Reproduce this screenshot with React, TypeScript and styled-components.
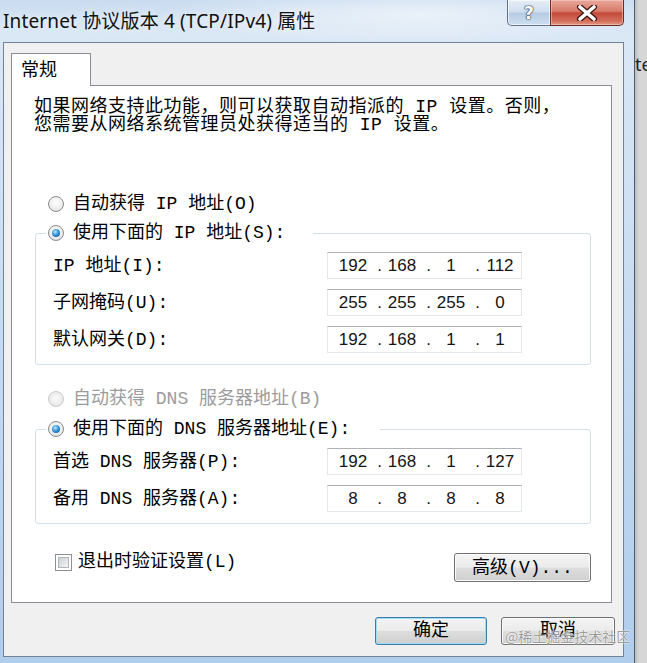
import React from 'react'
import styled, { createGlobalStyle } from 'styled-components'

const DIALOG_FONT = `"Liberation Mono", "Noto Sans CJK SC", monospace`
const TITLE_FONT = `"Noto Sans", "Noto Sans CJK SC", sans-serif`

interface IAddressRow {
  label: string;
  value: string;
}

const ipRows: IAddressRow[] = [
  { label: 'IP 地址(I):', value: '192.168.1.112' },
  { label: '子网掩码(U):', value: '255.255.255.0' },
  { label: '默认网关(D):', value: '192.168.1.1' },
]

const dnsRows: IAddressRow[] = [
  { label: '首选 DNS 服务器(P):', value: '192.168.1.127' },
  { label: '备用 DNS 服务器(A):', value: '8.8.8.8' },
]

const GlobalStyle = createGlobalStyle`
  html, body {
    margin: 0;
    padding: 0;
    background: #d4d4d4;
  }
`

const IpField: React.FC<{ value: string }> = ({ value }) => {
  const octets = value.split('.')
  return (
    <StyledIpBox>
      {octets.map((octet, i) => (
        <React.Fragment key={i}>
          {i > 0 && <StyledDot>.</StyledDot>}
          <StyledOctet>{octet}</StyledOctet>
        </React.Fragment>
      ))}
    </StyledIpBox>
  )
}

const AddressGroup: React.FC<{ legend: string; legendWidth: number; rows: IAddressRow[] }> = ({
  legend,
  legendWidth,
  rows,
}) => {
  return (
    <StyledFieldset>
      <StyledLegend $width={legendWidth}>
        <StyledOption>
          <StyledRadio $checked />
          <span>{legend}</span>
        </StyledOption>
      </StyledLegend>
      <StyledRows>
        {rows.map(row => (
          <StyledRow key={row.label}>
            <StyledRowLabel>{row.label}</StyledRowLabel>
            <IpField value={row.value} />
          </StyledRow>
        ))}
      </StyledRows>
    </StyledFieldset>
  )
}

const App: React.FC = () => {
  return (
    <StyledScreen>
      <GlobalStyle />
      <StyledWindow>
        <StyledTitleBar>
          <StyledTitle>Internet 协议版本 4 (TCP/IPv4) 属性</StyledTitle>
          <StyledCaptionButtons>
            <StyledHelpButton>?</StyledHelpButton>
            <StyledCloseButton>
              <svg width="22" height="16" viewBox="0 0 22 16">
                <path d="M4 2 L18 14 M18 2 L4 14" stroke="#3a1410" strokeWidth="6" strokeLinecap="round" />
                <path d="M4 2 L18 14 M18 2 L4 14" stroke="#ffffff" strokeWidth="3.6" strokeLinecap="round" />
              </svg>
            </StyledCloseButton>
          </StyledCaptionButtons>
        </StyledTitleBar>

        <StyledClient>
          <StyledTabStrip>
            <StyledTab>常规</StyledTab>
          </StyledTabStrip>
          <StyledPanel>
            <StyledDescription>
              <div>如果网络支持此功能，则可以获取自动指派的 IP 设置。否则，</div>
              <div>您需要从网络系统管理员处获得适当的 IP 设置。</div>
            </StyledDescription>

            <StyledOption $top={61}>
              <StyledRadio />
              <span>自动获得 IP 地址(O)</span>
            </StyledOption>
            <StyledGroupSlot $top={11}>
              <AddressGroup legend="使用下面的 IP 地址(S):" legendWidth={267} rows={ipRows} />
            </StyledGroupSlot>

            <StyledOption $top={25} $disabled>
              <StyledRadio $disabled />
              <span>自动获得 DNS 服务器地址(B)</span>
            </StyledOption>
            <StyledGroupSlot $top={12}>
              <AddressGroup legend="使用下面的 DNS 服务器地址(E):" legendWidth={334} rows={dnsRows} />
            </StyledGroupSlot>

            <StyledBottomRow>
              <StyledCheckOption>
                <StyledCheckBox />
                <span>退出时验证设置(L)</span>
              </StyledCheckOption>
              <StyledButton $width={137} $height={29}>高级(V)...</StyledButton>
            </StyledBottomRow>
          </StyledPanel>

          <StyledFooter>
            <StyledButton $width={112} $height={28} $focused>确定</StyledButton>
            <StyledButton $width={114} $height={28}>取消</StyledButton>
          </StyledFooter>
        </StyledClient>
      </StyledWindow>
      <StyledBehind>te</StyledBehind>
      <StyledWatermark>@稀土掘金技术社区</StyledWatermark>
    </StyledScreen>
  )
}

export default App

const StyledScreen = styled.div`
  position: relative;
  width: 647px;
  height: 663px;
  overflow: hidden;
  display: flex;
  background: #d4d4d4;
`

const StyledWindow = styled.div`
  width: 635px;
  height: 663px;
  flex: none;
  box-sizing: border-box;
  display: flex;
  flex-direction: column;
  border-right: 1px solid #4d5b6b;
  background: linear-gradient(180deg, #c9dcf0 0%, #dae7f5 5%, #c6dbf1 50%, #b0cdeb 100%);
`

const StyledTitleBar = styled.div`
  height: 42px;
  flex: none;
  display: flex;
  align-items: flex-start;
  justify-content: space-between;
  padding-left: 3px;
  background: radial-gradient(ellipse 260px 30px at 420px 14px, rgba(255, 255, 255, 0.55), rgba(255, 255, 255, 0));
`

const StyledTitle = styled.div`
  font-family: ${TITLE_FONT};
  font-size: 19px;
  letter-spacing: 0.15px;
  line-height: 24px;
  padding-top: 9px;
  color: #111;
  white-space: nowrap;
  text-shadow: 0 0 8px rgba(255, 255, 255, 0.9);
`

const StyledCaptionButtons = styled.div`
  display: flex;
  margin-right: 10px;
`

const StyledHelpButton = styled.div`
  width: 43px;
  height: 26px;
  box-sizing: border-box;
  border: 1px solid #62728a;
  border-top: none;
  border-right: none;
  border-bottom-left-radius: 5px;
  background: linear-gradient(180deg, #e6eef7 0%, #cfdeee 48%, #b6cbe2 52%, #cddff1 100%);
  box-shadow: inset 0 0 0 1px rgba(255, 255, 255, 0.6);
  display: flex;
  align-items: center;
  justify-content: center;
  font-family: "DejaVu Sans", sans-serif;
  font-weight: bold;
  font-size: 17px;
  color: #fff;
  text-shadow: 0 0 2px #2d3a4c, 0 0 1px #2d3a4c, 0 0 1px #2d3a4c;
`

const StyledCloseButton = styled.div`
  width: 74px;
  height: 26px;
  box-sizing: border-box;
  border: 1px solid #6a2a26;
  border-top: none;
  border-bottom-right-radius: 5px;
  background: linear-gradient(180deg, #e9a99c 0%, #d77b69 45%, #c4493a 52%, #d3705d 85%, #e29a84 100%);
  box-shadow: inset 0 0 0 1px rgba(255, 220, 210, 0.45);
  display: flex;
  align-items: center;
  justify-content: center;
`

const StyledClient = styled.div`
  margin-left: 3px;
  width: 621px;
  height: 615px;
  flex: none;
  box-sizing: border-box;
  border: 1px solid #6f8299;
  background: #f0f0f0;
  display: flex;
  flex-direction: column;
  font-family: ${DIALOG_FONT};
  font-size: 18px;
  line-height: 18px;
  color: #000;
`

const StyledTabStrip = styled.div`
  display: flex;
  padding: 10px 0 0 7px;
`

const StyledTab = styled.div`
  position: relative;
  z-index: 1;
  width: 80px;
  height: 33px;
  box-sizing: border-box;
  margin-bottom: -1px;
  padding: 8px 0 0 9px;
  border: 1px solid #898c95;
  border-bottom: none;
  background: #fff;
`

const StyledPanel = styled.div`
  margin-left: 7px;
  width: 601px;
  height: 518px;
  box-sizing: border-box;
  border: 1px solid #898c95;
  background: #fff;
  padding: 12px 20px 0 23px;
  display: flex;
  flex-direction: column;
`

const StyledDescription = styled.div`
  margin-left: -1px;
  white-space: nowrap;
  letter-spacing: 0.5px;
`

const StyledOption = styled.div<{ $top?: number; $disabled?: boolean }>`
  display: flex;
  align-items: center;
  gap: 9px;
  margin-top: ${p => p.$top || 0}px;
  margin-left: ${p => (p.$top ? 13 : 0)}px;
  color: ${p => (p.$disabled ? '#9c9c9c' : '#000')};
  white-space: nowrap;
`

const StyledRadio = styled.span<{ $checked?: boolean; $disabled?: boolean }>`
  width: 16px;
  height: 16px;
  flex: none;
  box-sizing: border-box;
  border-radius: 50%;
  border: 1px solid ${p => (p.$disabled ? '#c9cacb' : '#8a8b8c')};
  background: ${p =>
    p.$disabled
      ? 'radial-gradient(circle at 50% 45%, #fafafa 0%, #ececec 60%, #dedede 100%)'
      : 'radial-gradient(circle at 50% 40%, #ffffff 0%, #eeeeee 55%, #cfd1d3 100%)'};
  display: flex;
  align-items: center;
  justify-content: center;

  &::after {
    content: '';
    display: ${p => (p.$checked ? 'block' : 'none')};
    width: 8px;
    height: 8px;
    border-radius: 50%;
    background: radial-gradient(circle at 40% 35%, #b6e8ff 0%, #3a97dc 45%, #123f75 100%);
  }
`

const StyledGroupSlot = styled.div<{ $top: number }>`
  margin-top: ${p => p.$top}px;
`

const StyledFieldset = styled.fieldset`
  margin: 0;
  min-width: 0;
  padding: 10px 0 11px 10px;
  border: 1px solid #d5dfe5;
  border-radius: 3px;
`

const StyledLegend = styled.legend<{ $width: number }>`
  width: ${p => p.$width}px;
  box-sizing: border-box;
  padding: 0 0 0 2px;
  line-height: 18px;
`

const StyledRows = styled.div`
  display: flex;
  flex-direction: column;
  gap: 10px;
  padding-left: 7px;
`

const StyledRow = styled.div`
  display: flex;
  align-items: center;
`

const StyledRowLabel = styled.span`
  width: 274px;
  flex: none;
  white-space: nowrap;
`

const StyledIpBox = styled.div`
  width: 195px;
  height: 27px;
  box-sizing: border-box;
  border: 1px solid #e2e7ec;
  border-top-color: #aeb1b6;
  background: #fff;
  display: flex;
  align-items: center;
  padding-left: 5px;
  font-family: "Liberation Sans", sans-serif;
  font-size: 17px;
  color: #141414;
`

const StyledOctet = styled.span`
  width: 40px;
  text-align: center;
`

const StyledDot = styled.span`
  width: 9px;
  text-align: right;
`

const StyledBottomRow = styled.div`
  margin-top: 29px;
  display: flex;
  align-items: flex-start;
  justify-content: space-between;
`

const StyledCheckOption = styled.div`
  display: flex;
  align-items: center;
  gap: 6px;
  margin-left: 20px;
  white-space: nowrap;
`

const StyledCheckBox = styled.span`
  width: 17px;
  height: 17px;
  flex: none;
  box-sizing: border-box;
  border: 1px solid #8e8f8f;
  background: #fff;
  padding: 2px;

  &::after {
    content: '';
    display: block;
    width: 100%;
    height: 100%;
    box-sizing: border-box;
    border: 1px solid #aeb3b9;
    background: linear-gradient(135deg, #cbcfd5 0%, #f6f6f6 100%);
  }
`

const StyledButton = styled.div<{ $width: number; $height: number; $focused?: boolean }>`
  width: ${p => p.$width}px;
  height: ${p => p.$height}px;
  box-sizing: border-box;
  border: 1px solid ${p => (p.$focused ? '#3d7bad' : '#707070')};
  border-radius: 3px;
  background: linear-gradient(180deg, #f4f4f4 0%, #ebebeb 48%, #dddddd 52%, #cfcfcf 100%);
  box-shadow: inset 0 0 0 1px ${p => (p.$focused ? '#9fdcf6' : '#fbfbfb')};
  display: flex;
  align-items: center;
  justify-content: center;
  white-space: nowrap;
`

const StyledFooter = styled.div`
  display: flex;
  justify-content: flex-end;
  gap: 14px;
  margin-top: 14px;
  padding-right: 8px;
`

const StyledBehind = styled.div`
  flex: 1;
  padding-top: 52px;
  font-family: "Noto Sans", sans-serif;
  font-size: 18px;
  line-height: 24px;
  color: #222;
  overflow: hidden;
  white-space: nowrap;
  background: linear-gradient(90deg, #b8bcc2 0, #d6d6d6 4px);
`

const StyledWatermark = styled.div`
  position: absolute;
  left: 505px;
  top: 627px;
  font-family: "Noto Sans CJK SC", sans-serif;
  font-size: 14px;
  line-height: 18px;
  color: rgba(140, 140, 140, 0.85);
  text-shadow: 0 0 2px #fff, 0 0 1px #fff;
  white-space: nowrap;
`
